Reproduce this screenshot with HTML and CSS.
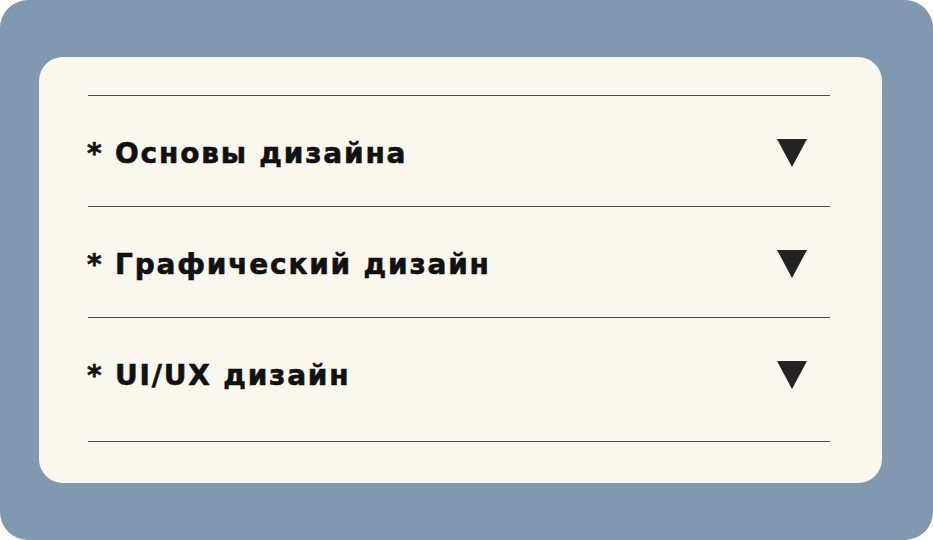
FILE: index.html
```html
<!DOCTYPE html>
<html lang="ru">
<head>
<meta charset="utf-8">
<link rel="stylesheet" href="styles.css">
</head>
<body>
<div class="frame">
  <section class="card">
    <div class="item">
      <span class="title">* Основы дизайна</span>
      <svg class="arrow" width="30" height="28" viewBox="0 0 30 28"><polygon points="0,0 30,0 15,28" fill="#232323"/></svg>
    </div>
    <div class="item">
      <span class="title">* Графический дизайн</span>
      <svg class="arrow" width="30" height="28" viewBox="0 0 30 28"><polygon points="0,0 30,0 15,28" fill="#232323"/></svg>
    </div>
    <div class="item last">
      <span class="title">* UI/UX дизайн</span>
      <svg class="arrow" width="30" height="28" viewBox="0 0 30 28"><polygon points="0,0 30,0 15,28" fill="#232323"/></svg>
    </div>
  </section>
</div>
</body>
</html>
```
FILE: styles.css
```css
html, body {
  margin: 0;
  padding: 0;
  background: #ffffff;
}
.frame {
  width: 933px;
  height: 540px;
  box-sizing: border-box;
  background: #8199af;
  border-radius: 28px;
  padding: 57px 51px 57px 39px;
}
.card {
  height: 426px;
  box-sizing: border-box;
  background: #faf8ee;
  border-radius: 24px;
  padding: 38px 52px 0 49px;
}
.item {
  border-top: 1px solid #4a4a4a;
  height: 106px;
  display: flex;
  align-items: center;
  justify-content: space-between;
  padding: 4px 23px 0 0;
  box-sizing: content-box;
}
.item.last {
  padding-bottom: 13px;
  border-bottom: 1px solid #4a4a4a;
}
.title {
  font-family: "DejaVu Sans", sans-serif;
  font-weight: 700;
  font-size: 28px;
  color: #111111;
  letter-spacing: 1.8px;
  margin-left: -1px;
  -webkit-text-stroke: 0.6px #111111;
}
.arrow {
  display: block;
}
```
